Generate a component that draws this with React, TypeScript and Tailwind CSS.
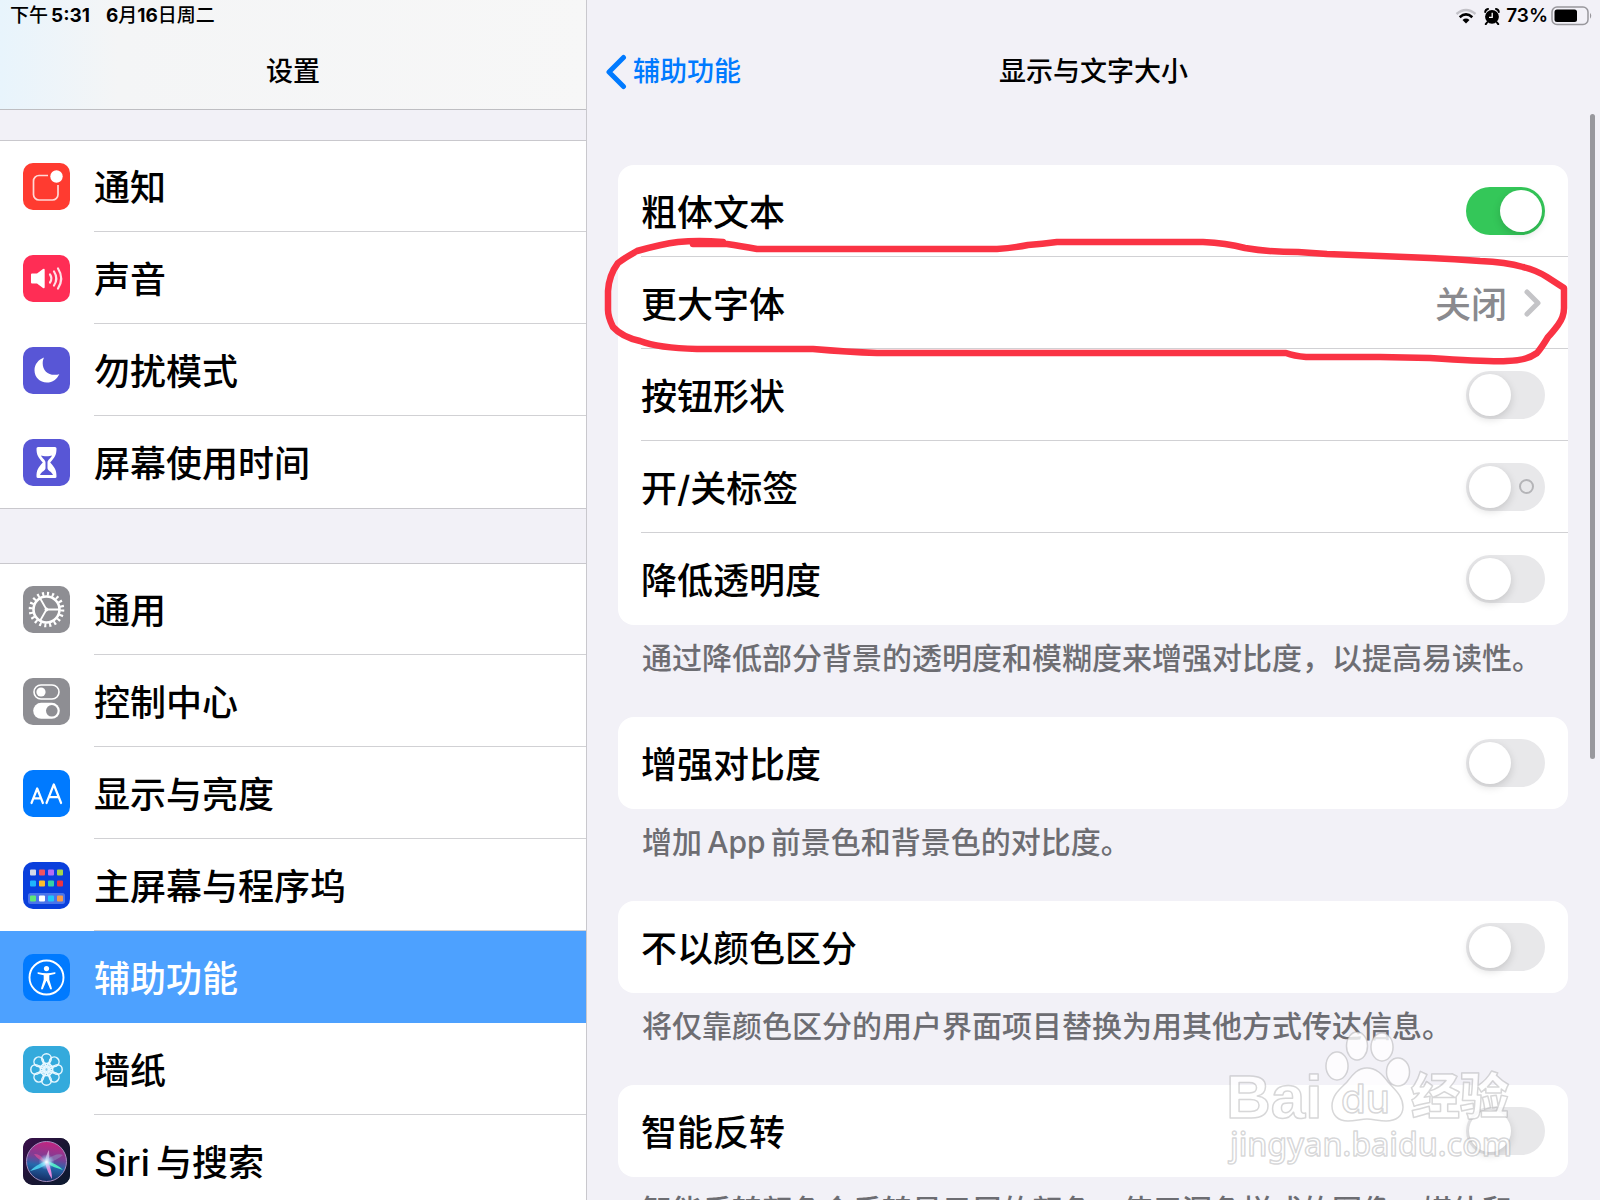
import type { ReactNode } from "react";
import clsx from "clsx";

interface MenuItem {
  id: string;
  label: string;
  tile: string;
  icon: ReactNode;
}

interface SettingItem {
  id: string;
  label: string;
  on?: boolean;
  value?: string;
  marked?: boolean;
}

interface SettingGroup {
  items: SettingItem[];
  note: string;
  circled?: boolean;
}

const PETALS = [0, 45, 90, 135, 180, 225, 270, 315];

const deviceMenu: MenuItem[] = [
  {
    id: "notifications",
    label: "通知",
    tile: "bg-[#ff3b30]",
    icon: (
      <g>
        <path
          d="M25 12.5H16a5.500 5.500 0 0 0-5.500 5.500v13.500a5.500 5.500 0 0 0 5.500 5.500h13.500a5.500 5.500 0 0 0 5.500-5.500V22"
          fill="none"
          stroke="#ffd9d6"
          strokeWidth="1.700"
        />
        <circle cx="33.500" cy="13.500" r="6.200" fill="#fff" />
      </g>
    ),
  },
  {
    id: "sounds",
    label: "声音",
    tile: "bg-[#ff2d55]",
    icon: (
      <g>
        <path
          d="M9 18.500h5l6-4.500q1.700-1 1.700 1v17q0 2-1.700 1l-6-4.500H9q-1 0-1-1v-8q0-1 1-1z"
          fill="#fff"
        />
        <path
          d="M27 19.500q2.800 4 0 8M31 16.500q4.600 7 0 14M35 13.500q6.400 10 0 20"
          fill="none"
          stroke="#ffe0e6"
          strokeWidth="2.200"
          strokeLinecap="round"
        />
      </g>
    ),
  },
  {
    id: "dnd",
    label: "勿扰模式",
    tile: "bg-[#5856d6]",
    icon: (
      <path
        d="M21 10.500C15.500 12.500 11.500 17.300 11.500 23.200c0 7 5.500 12.300 12.300 12.300 5.700 0 10.500-3.500 12.500-8.600-1.300.6-3.200.9-4.800.9-7 0-11.800-4.900-11.800-11.400 0-2.100.4-4 1.300-5.900z"
        fill="#fff"
      />
    ),
  },
  {
    id: "screen-time",
    label: "屏幕使用时间",
    tile: "bg-[#5856d6]",
    icon: (
      <g>
        <path
          d="M15 8h17q1.500 0 1.500 1.500c0 6.500-1.700 8.800-6.300 14 4.600 5.200 6.300 7.500 6.300 14q0 1.500-1.500 1.500H15q-1.500 0-1.500-1.500c0-6.500 1.700-8.800 6.300-14-4.600-5.200-6.300-7.500-6.300-14Q13.500 8 15 8z"
          fill="#fff"
        />
        <path
          d="M18 16.500c2 1 9 1 11 0-1 2.500-4.500 4.500-4.500 7v5.500c0 3 4 3 5.500 7H17c1.500-4 5.500-4 5.500-7v-5.500c0-2.500-3.500-4.500-4.500-7z"
          fill="#5856d6"
        />
      </g>
    ),
  },
];

const systemMenu: MenuItem[] = [
  {
    id: "general",
    label: "通用",
    tile: "bg-[#8e8e93]",
    icon: (
      <g fill="none" stroke="#fff">
        <circle cx="23.500" cy="23.500" r="13" strokeWidth="2.600" />
        <circle
          cx="23.500"
          cy="23.500"
          r="15.800"
          strokeWidth="4"
          strokeDasharray="2.100 2.864"
        />
        <path
          d="M23.500 23.500H37M23.500 23.500L16.800 11.800M23.500 23.500L16.800 35.200"
          strokeWidth="1.800"
        />
        <circle cx="23.500" cy="23.500" r="1.500" fill="#fff" />
      </g>
    ),
  },
  {
    id: "control-center",
    label: "控制中心",
    tile: "bg-[#8e8e93]",
    icon: (
      <g>
        <rect
          x="11"
          y="7"
          width="25"
          height="14"
          rx="7"
          fill="none"
          stroke="#fff"
          strokeWidth="1.600"
        />
        <circle cx="18" cy="14" r="4.600" fill="#fff" />
        <rect x="10.200" y="24.800" width="26.600" height="16" rx="8" fill="#fff" />
        <circle cx="28.800" cy="32.800" r="5.800" fill="#8e8e93" />
      </g>
    ),
  },
  {
    id: "display",
    label: "显示与亮度",
    tile: "bg-[#007aff]",
    icon: (
      <path
        d="M8.500 33l5.700-14.500 5.700 14.500M10.400 28.300h7.600M23.500 33l7.300-18.500 7.300 18.500M26 27.200h9.600"
        fill="none"
        stroke="#fff"
        strokeWidth="2.200"
        strokeLinecap="round"
        strokeLinejoin="round"
      />
    ),
  },
  {
    id: "home-screen",
    label: "主屏幕与程序坞",
    tile: "bg-[#0a3fdc]",
    icon: (
      <g>
        <rect x="5" y="31" width="37" height="11" rx="2.500" fill="#4a74ea" />
        <rect x="7" y="7.500" width="6" height="6" rx="1" fill="#d4d8e8" />
        <rect x="16" y="7.500" width="6" height="6" rx="1" fill="#f4525f" />
        <rect x="25" y="7.500" width="6" height="6" rx="1" fill="#b36cf5" />
        <rect x="34" y="7.500" width="6" height="6" rx="1" fill="#a5d64c" />
        <rect x="7" y="18.500" width="6" height="6" rx="1" fill="#1fb4fb" />
        <rect x="16" y="18.500" width="6" height="6" rx="1" fill="#fdbd2c" />
        <rect x="25" y="18.500" width="6" height="6" rx="1" fill="#35d2a5" />
        <rect x="34" y="18.500" width="6" height="6" rx="1" fill="#ee3440" />
        <rect x="7" y="33.500" width="6" height="6" rx="1" fill="#5fe877" />
        <rect x="16" y="33.500" width="6" height="6" rx="1" fill="#fff" />
        <rect x="25" y="33.500" width="6" height="6" rx="1" fill="#1fc8fb" />
        <rect x="34" y="33.500" width="6" height="6" rx="1" fill="#f79a4b" />
      </g>
    ),
  },
  {
    id: "accessibility",
    label: "辅助功能",
    tile: "bg-[#007aff]",
    icon: (
      <g>
        <circle cx="23.500" cy="23.500" r="17" fill="none" stroke="#fff" strokeWidth="1.900" />
        <circle cx="23.500" cy="14.600" r="2.600" fill="#fff" />
        <path
          d="M15.300 18.200q8.200 1.900 16.400 0 1 0 .9.900 0 .7-.8.900l-5.500 1.200v4.500l2.600 8.600q.2 1-.7 1.200-.9.100-1.200-.7l-3.300-7.800h-.4l-3.300 7.800q-.3.800-1.200.7-.9-.2-.7-1.200l2.600-8.600v-4.500l-5.500-1.200q-.8-.2-.8-.9-.1-.9.900-.9z"
          fill="#fff"
        />
      </g>
    ),
  },
  {
    id: "wallpaper",
    label: "墙纸",
    tile: "bg-[#34aadc]",
    icon: (
      <g fill="none" stroke="#e6f7ff" strokeWidth="1.500">
        {PETALS.map((angle) => (
          <g key={angle} transform={`rotate(${angle} 23.500 23.500)`}>
            <circle cx="23.500" cy="12.600" r="4.800" />
            <path d="M19.800 15.800Q22.500 18 23.500 21Q24.500 18 27.200 15.800" />
          </g>
        ))}
        <circle cx="23.500" cy="23.500" r="2.700" />
      </g>
    ),
  },
  {
    id: "siri",
    label: "Siri\u2009与搜索",
    tile: "bg-[#17152f]",
    icon: (
      <g>
        <defs>
          <linearGradient id="siri-bg" x1="0" y1="0" x2="1" y2="1">
            <stop offset="0" stopColor="#3d0f4d" />
            <stop offset="0.500" stopColor="#1a1533" />
            <stop offset="1" stopColor="#0c1a30" />
          </linearGradient>
          <linearGradient id="siri-orb" x1="0.550" y1="0" x2="0.400" y2="1">
            <stop offset="0" stopColor="#c4237f" />
            <stop offset="0.400" stopColor="#7d3f96" />
            <stop offset="0.620" stopColor="#2568ac" />
            <stop offset="1" stopColor="#14285e" />
          </linearGradient>
          <radialGradient id="siri-glow">
            <stop offset="0" stopColor="#fff" />
            <stop offset="0.400" stopColor="#bfe9ff" stopOpacity="0.700" />
            <stop offset="1" stopColor="#8fd8ff" stopOpacity="0" />
          </radialGradient>
        </defs>
        <rect width="47" height="47" fill="url(#siri-bg)" />
        <circle cx="23.500" cy="23.500" r="20" fill="url(#siri-orb)" stroke="#a78fc0" strokeWidth="1" />
        <path d="M23 22Q34 14 40 17Q35 22 23 25z" fill="#8d86bb" opacity="0.600" />
        <path d="M23 24Q17 15 11 16Q15 22 23 25z" fill="#d94f9a" opacity="0.700" />
        <path d="M23 23Q33 25 40 32Q31 30 23 25z" fill="#4de8c4" />
        <path d="M23 23Q13 27 7 33Q17 31 24 26z" fill="#48c6e8" />
        <path d="M22 24Q24 34 29 41Q29 33 25 23z" fill="#e48be0" />
        <path d="M22 25Q23 16 26 12Q27 18 25 25z" fill="#e9c4ee" opacity="0.700" />
        <circle cx="23.500" cy="24" r="8" fill="url(#siri-glow)" />
      </g>
    ),
  },
];

const groups: SettingGroup[] = [
  {
    circled: true,
    items: [
      { id: "bold-text", label: "粗体文本", on: true },
      { id: "larger-text", label: "更大字体", value: "关闭" },
      { id: "button-shapes", label: "按钮形状" },
      { id: "on-off-labels", label: "开/关标签", marked: true },
      { id: "reduce-transparency", label: "降低透明度" },
    ],
    note: "通过降低部分背景的透明度和模糊度来增强对比度，以提高易读性。",
  },
  {
    items: [{ id: "increase-contrast", label: "增强对比度" }],
    note: "增加\u2009App\u2009前景色和背景色的对比度。",
  },
  {
    items: [{ id: "without-color", label: "不以颜色区分" }],
    note: "将仅靠颜色区分的用户界面项目替换为用其他方式传达信息。",
  },
  {
    items: [{ id: "smart-invert", label: "智能反转" }],
    note: "智能反转颜色会反转显示屏的颜色，使用深色样式的图像、媒体和",
  },
];

function Menu({ items, activeId }: { items: MenuItem[]; activeId?: string }) {
  return (
    <ul className="bg-white shadow-[inset_0_1px_0_#c9c8cd,0_1px_0_#c9c8cd]">
      {items.map((item, index) => {
        const active = item.id === activeId;
        return (
          <li key={item.id}>
            <a
              href={`#${item.id}`}
              className={clsx(
                "flex h-[92px] items-stretch pl-[23px]",
                active ? "bg-[#4da1ff] text-white" : "text-black",
              )}
            >
              <span
                className={clsx(
                  "mr-6 size-[47px] shrink-0 self-center overflow-hidden rounded-[10px]",
                  item.tile,
                )}
              >
                <svg viewBox="0 0 47 47" className="size-full" aria-hidden="true">
                  {item.icon}
                </svg>
              </span>
              <span
                className={clsx(
                  "flex flex-1 items-center pt-1 text-[36px]",
                  index < items.length - 1 && !active && "border-b border-[#d1d1d4]",
                )}
              >
                {item.label}
              </span>
            </a>
          </li>
        );
      })}
    </ul>
  );
}

function SettingRow({ item, last }: { item: SettingItem; last: boolean }) {
  const row = clsx(
    "ml-[23px] flex h-[92px] items-center justify-between pr-[23px] text-[36px]",
    !last && "border-b border-[#d1d1d4]",
  );

  if (item.value) {
    return (
      <a href={`#${item.id}`} className={row}>
        <span className="pt-1">{item.label}</span>
        <span className="flex items-center gap-4 text-[#8a8a8e]">
          <span className="pt-1">{item.value}</span>
          <svg viewBox="0 0 22 28" className="h-7 w-[22px]" aria-hidden="true">
            <path
              d="M4 3l11 11L4 25"
              fill="none"
              stroke="#c4c4c7"
              strokeWidth="5"
              strokeLinecap="round"
              strokeLinejoin="round"
            />
          </svg>
        </span>
      </a>
    );
  }

  return (
    <div className={row}>
      <label htmlFor={item.id} className="pt-1">
        {item.label}
      </label>
      <input
        id={item.id}
        type="checkbox"
        defaultChecked={item.on}
        className={clsx(
          "flex h-12 w-[79px] shrink-0 appearance-none items-center rounded-full bg-[#e8e8ea] px-[3px] before:size-[42px] before:rounded-full before:bg-white before:shadow-[0_3px_8px_rgba(0,0,0,0.15)] checked:justify-end checked:bg-[#34c759]",
          item.marked &&
            "after:ml-2 after:size-[15px] after:rounded-full after:border-2 after:border-[#b4b4b7]",
        )}
      />
    </div>
  );
}

// Hand-drawn ring around the second row of the first card
function Scribble() {
  return (
    <svg
      viewBox="0 0 950 460"
      preserveAspectRatio="none"
      className="pointer-events-none absolute inset-0 size-full overflow-visible"
      aria-hidden="true"
    >
      <path
        d="M75 79L109 79Q122 81 139 84H379Q395 83 410 80Q424 79 439 77H585Q608 78 627 83Q650 87 680 87L709 89Q738 90 762 91L812 93Q836 94 862 96Q888 97 905 102Q918 105 929 112L946 123V143Q946 152 940 160Q934 168 930 172Q924 182 919 188Q908 196 889 196Q874 197 812 193L762 192H688Q676 191 668 188H259Q230 187 195 184H79Q40 183 22 176Q4 172-5 162Q-10 152-10 145V126Q-9 110 0 98Q8 92 19 86Q44 79 60 77Q80 75 105 77"
        fill="none"
        stroke="#fa3344"
        strokeWidth="6.500"
        strokeLinecap="round"
        strokeLinejoin="round"
      />
    </svg>
  );
}

function StatusIcons() {
  return (
    <div className="flex items-center text-[19px] font-semibold">
      <svg viewBox="0 0 22 16" className="mr-[7px] h-4 w-[22px]" fill="none" aria-hidden="true">
        <path d="M1.500 6Q11-2.200 20.500 6" stroke="#c3c2c8" strokeWidth="2.400" />
        <path d="M4.700 9.200Q11 3.600 17.300 9.200" stroke="#000" strokeWidth="2.600" />
        <path d="M11 15.500l-3.500-3.600q3.500-2.800 7 0z" fill="#000" />
      </svg>
      <svg viewBox="0 0 16 17" className="mr-[6px] h-[17px] w-4" aria-hidden="true">
        <circle cx="8" cy="8.800" r="6.900" fill="#000" />
        <path
          d="M1.200 4Q1.400 1.600 4 1M14.800 4Q14.600 1.600 12 1M3 14.500l-1.200 1.700M13 14.500l1.200 1.700"
          stroke="#000"
          strokeWidth="2"
          strokeLinecap="round"
        />
        <path d="M8.200 4.800v4.600H5" fill="none" stroke="#fff" strokeWidth="1.300" />
      </svg>
      <span>73%</span>
      <svg viewBox="0 0 42 20" className="ml-[3px] h-5 w-[42px]" aria-hidden="true">
        <rect
          x="1"
          y="1"
          width="36"
          height="17.500"
          rx="5"
          fill="none"
          stroke="#98979c"
          strokeWidth="1.500"
        />
        <rect x="3.500" y="3.500" width="22.500" height="12.500" rx="2.500" fill="#000" />
        <path d="M39 6.800q2.500 3 0 6z" fill="#98979c" />
      </svg>
    </div>
  );
}

function Watermark() {
  return (
    <svg
      viewBox="0 0 300 142"
      className="pointer-events-none absolute right-20 bottom-7 h-[142px] w-[300px]"
      fill="#fff"
      fillOpacity="0.800"
      stroke="#8c8c90"
      strokeOpacity="0.350"
      strokeWidth="1.500"
      strokeLinejoin="round"
      aria-hidden="true"
    >
      <text x="6" y="88" fontFamily="Liberation Sans" fontWeight="700" fontSize="62">
        Bai
      </text>
      <ellipse cx="117" cy="36" rx="11" ry="14" />
      <ellipse cx="137" cy="16" rx="10.500" ry="14" />
      <ellipse cx="162" cy="17" rx="11" ry="14" />
      <ellipse cx="178" cy="42" rx="11.500" ry="14" />
      <path d="M147 38c9 0 15 6 21 14 7 8 15 14 15 25 0 9-7 14-17 14-7 0-13-2-19-2s-12 2-19 2c-10 0-16-6-16-15 0-11 8-17 15-24 6-8 11-14 20-14z" />
      <text x="121" y="83" fontFamily="Inter" fontWeight="500" fontSize="40">
        du
      </text>
      <text x="191" y="84" fontFamily="Noto Sans CJK SC" fontWeight="900" fontSize="49">
        经验
      </text>
      <text x="10" y="126" fontFamily="Noto Sans" fontSize="32">
        jingyan.baidu.com
      </text>
    </svg>
  );
}

export default function App() {
  return (
    <div className="flex h-screen overflow-hidden bg-[#f2f1f7] font-['Inter','Noto_Sans_CJK_SC',sans-serif] font-medium text-black">
      <aside className="w-[587px] shrink-0 overflow-hidden border-r border-[#c9c8cd]">
        <header className="h-[110px] border-b border-[#bebec2] bg-linear-to-r from-[#e8f4fc] via-[#f4f5f6] via-20% to-[#f7f7f7]">
          <div className="flex h-8 items-center gap-4 pl-[10px] text-[19px] font-bold">
            <span>
              <span className="font-medium">下午</span>
              {"\u2009"}5:31
            </span>
            <span>
              6<span className="font-medium">月</span>16<span className="font-medium">日周二</span>
            </span>
          </div>
          <h2 className="flex h-20 items-center justify-center text-[27px]">设置</h2>
        </header>
        <nav className="flex flex-col gap-[55px] pt-[30px]">
          <Menu items={deviceMenu} />
          <Menu items={systemMenu} activeId="accessibility" />
        </nav>
      </aside>

      <main className="relative flex-1 overflow-hidden">
        <header className="h-[110px]">
          <div className="flex h-8 items-center justify-end pr-[7px]">
            <StatusIcons />
          </div>
          <div className="grid h-20 grid-cols-[1fr_auto_1fr] items-center px-[18px] text-[27px]">
            <button type="button" className="flex items-center gap-[6px] text-[#007aff]">
              <svg viewBox="0 0 22 36" className="h-9 w-[22px]" aria-hidden="true">
                <path
                  d="M18.500 3.500L4 18l14.500 14.500"
                  fill="none"
                  stroke="currentColor"
                  strokeWidth="5"
                  strokeLinecap="round"
                  strokeLinejoin="round"
                />
              </svg>
              辅助功能
            </button>
            <h1>显示与文字大小</h1>
          </div>
        </header>

        <div className="pt-[55px] pr-8 pl-[31px]">
          {groups.map((group) => (
            <section key={group.items[0].id}>
              <div className="relative rounded-2xl bg-white">
                {group.items.map((item, index) => (
                  <SettingRow
                    key={item.id}
                    item={item}
                    last={index === group.items.length - 1}
                  />
                ))}
                {group.circled && <Scribble />}
              </div>
              <p className="h-[92px] pt-[11px] pl-6 text-[30px] leading-[44px] whitespace-nowrap text-[#6d6d72]">
                {group.note}
              </p>
            </section>
          ))}
        </div>

        <div className="absolute top-[114px] right-[5px] h-[645px] w-[5px] rounded-full bg-[#98989d]" />
        <Watermark />
      </main>
    </div>
  );
}
